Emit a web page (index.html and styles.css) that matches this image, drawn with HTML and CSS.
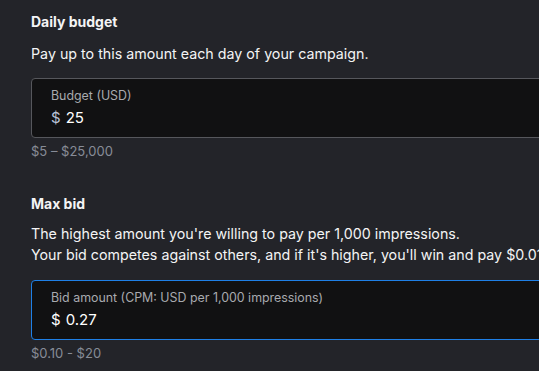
FILE: index.html
```html
<!DOCTYPE html>
<html>
<head>
<meta charset="utf-8">
<link rel="stylesheet" href="styles.css">
</head>
<body>
<div class="page">
  <section class="section">
    <h2 class="title">Daily budget</h2>
    <p class="desc">Pay up to this amount each day of your campaign.</p>
    <div class="field">
      <div class="label">Budget (USD)</div>
      <div class="value"><span class="muted">$</span><span>25</span></div>
    </div>
    <div class="hint">$5 – $25,000</div>
  </section>
  <section class="section second">
    <h2 class="title">Max bid</h2>
    <p class="desc">The highest amount you're willing to pay per 1,000 impressions.<br>Your bid competes against others, and if it's higher, you'll win and pay $0.01 more than the next highest bid.</p>
    <div class="field focused">
      <div class="label">Bid amount (CPM: USD per 1,000 impressions)</div>
      <div class="value"><span>$</span><span>0.27</span></div>
    </div>
    <div class="hint">$0.10 - $20</div>
  </section>
</div>
</body>
</html>
```
FILE: styles.css
```css
html, body {
  margin: 0;
  padding: 0;
  background: #232429;
  overflow: hidden;
}
body {
  font-family: Inter, "Noto Sans", sans-serif;
  color: #f4f4f5;
}
.page {
  width: 640px;
  padding: 13px 0 0 31px;
}
.section {
  display: flex;
  flex-direction: column;
}
.second {
  margin-top: 36px;
}
.title {
  margin: 0;
  font-size: 14px;
  font-weight: 700;
  line-height: 18px;
}
.desc {
  margin: 12px 0 0;
  font-size: 14.25px;
  line-height: 21px;
  white-space: nowrap;
}
.second .desc {
  margin-top: 10px;
}
.field {
  margin-top: 14px;
  height: 49px;
  border: 1px solid #56575c;
  border-radius: 4px;
  background: #111112;
  padding: 9px 19px 0;
  display: flex;
  flex-direction: column;
  gap: 5px;
}
.second .field {
  margin-top: 15px;
}
.focused {
  border-color: #1f80e6;
}
.label {
  font-size: 12.4px;
  line-height: 16px;
  color: #a8aaaf;
}
.value {
  font-size: 15px;
  line-height: 18px;
  color: #ffffff;
  display: flex;
  gap: 5px;
}
.muted {
  color: #b9c2d6;
}
.hint {
  margin-top: 5px;
  font-size: 13px;
  line-height: 16px;
  color: #878c97;
}
```
